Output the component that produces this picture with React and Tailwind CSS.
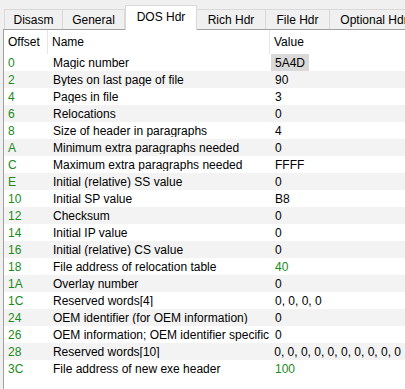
import React from "react";

const tabs = [
  { label: "Disasm", w: "w-[59px]" },
  { label: "General", w: "w-[63px]" },
  { label: "DOS Hdr", w: "w-[72px]", active: true },
  { label: "Rich Hdr", w: "w-[70px]" },
  { label: "File Hdr", w: "w-[65px]" },
  { label: "Optional Hdr", w: "w-[90px]" },
];

const rows = [
  ["0", "Magic number", "5A4D"],
  ["2", "Bytes on last page of file", "90"],
  ["4", "Pages in file", "3"],
  ["6", "Relocations", "0"],
  ["8", "Size of header in paragraphs", "4"],
  ["A", "Minimum extra paragraphs needed", "0"],
  ["C", "Maximum extra paragraphs needed", "FFFF"],
  ["E", "Initial (relative) SS value", "0"],
  ["10", "Initial SP value", "B8"],
  ["12", "Checksum", "0"],
  ["14", "Initial IP value", "0"],
  ["16", "Initial (relative) CS value", "0"],
  ["18", "File address of relocation table", "40", true],
  ["1A", "Overlay number", "0"],
  ["1C", "Reserved words[4]", "0, 0, 0, 0"],
  ["24", "OEM identifier (for OEM information)", "0"],
  ["26", "OEM information; OEM identifier specific", "0"],
  ["28", "Reserved words[10]", "0, 0, 0, 0, 0, 0, 0, 0, 0, 0"],
  ["3C", "File address of new exe header", "100", true],
];

export default function App() {
  return (
    <div className="w-[405px] h-[389px] overflow-hidden bg-[#f0f0f0] font-['Liberation_Sans',sans-serif] text-[12px] text-black leading-none">
      {/* tab strip */}
      <div className="flex items-end h-[29px] pl-[4px]">
        {tabs.map((t) =>
          t.active ? (
            <div
              key={t.label}
              className={`${t.w} shrink-0 h-[25px] -mb-px relative z-10 bg-white border border-b-0 border-[#d9d9d9] flex items-center justify-center pb-[2px]`}
            >
              {t.label}
            </div>
          ) : (
            <div
              key={t.label}
              className={`${t.w} shrink-0 h-[20px] bg-[#f0f0f0] border border-b-0 border-[#d9d9d9] -ml-px first:ml-0 flex items-center justify-center`}
            >
              {t.label}
            </div>
          )
        )}
      </div>

      {/* list panel */}
      <div className="ml-[3px] h-[360px] bg-white border-l border-t border-[#a0a0a0]">
        <div className="flex h-[24px] items-center">
          <div className="w-[44px] h-full pl-[4px] flex items-center border-r border-[#e5e5e5]">Offset</div>
          <div className="w-[222px] h-full pl-[4px] flex items-center border-r border-[#e5e5e5]">Name</div>
          <div className="flex-1 h-full pl-[4px] flex items-center">Value</div>
        </div>
        {rows.map(([off, name, val, green], i) => (
          <div
            key={off}
            className={`flex h-[17px] items-center ${i % 2 ? "bg-[#f3f3f3]" : "bg-white"}`}
          >
            <div className="w-[45px] pl-[4px] text-[#1a8a1a]">{off}</div>
            <div className="w-[222px] pl-[4px] whitespace-nowrap overflow-hidden">{name}</div>
            <div className="flex-1 flex h-full">
              <span
                className={`h-full flex items-center px-[4px] whitespace-nowrap ${
                  i === 0 ? "bg-[#d9d9d9]" : ""
                } ${green ? "text-[#1a8a1a]" : ""}`}
              >
                {val}
              </span>
            </div>
          </div>
        ))}
      </div>
    </div>
  );
}
